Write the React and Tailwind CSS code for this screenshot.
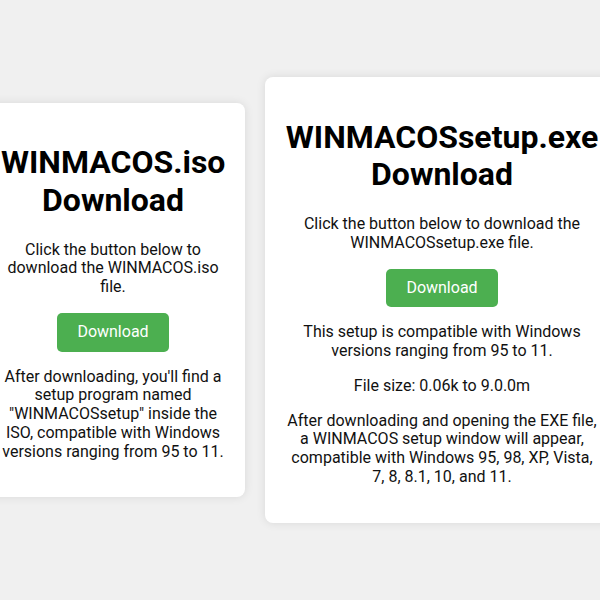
import React from 'react';

const cards = [
  {
    id: 'iso',
    width: 'w-[264px]',
    title: 'WINMACOS.iso Download',
    intro: 'Click the button below to download the WINMACOS.iso file.',
    notes: [
      'After downloading, you\'ll find a setup program named "WINMACOSsetup" inside the ISO, compatible with Windows versions ranging from 95 to 11.',
    ],
  },
  {
    id: 'exe',
    width: 'w-[354px]',
    title: 'WINMACOSsetup.exe Download',
    intro: 'Click the button below to download the WINMACOSsetup.exe file.',
    notes: [
      'This setup is compatible with Windows versions ranging from 95 to 11.',
      'File size: 0.06k to 9.0.0m',
      'After downloading and opening the EXE file, a WINMACOS setup window will appear, compatible with Windows 95, 98, XP, Vista, 7, 8, 8.1, 10, and 11.',
    ],
  },
];

function DownloadCard({ card }) {
  return (
    <div className={`${card.width} shrink-0 bg-white rounded-lg shadow-[0_0_10px_rgba(0,0,0,0.1)] p-5 text-center`}>
      <h1 className="text-[32px] leading-[1.172] font-bold text-black my-[21.4px]">{card.title}</h1>
      <p className="my-4">{card.intro}</p>
      <button className="bg-[#4caf50] text-white px-5 py-[10px] rounded-[5px] leading-[1.172]">
        Download
      </button>
      {card.notes.map((note, i) => (
        <p key={i} className="my-4">{note}</p>
      ))}
    </div>
  );
}

export default function App() {
  return (
    <div
      className="min-h-screen bg-[#f0f0f0] flex items-center justify-center gap-5 overflow-hidden text-base leading-[1.172] text-[#111]"
      style={{ fontFamily: 'Roboto, "Liberation Sans", sans-serif' }}
    >
      {cards.map((card) => (
        <DownloadCard key={card.id} card={card} />
      ))}
    </div>
  );
}
